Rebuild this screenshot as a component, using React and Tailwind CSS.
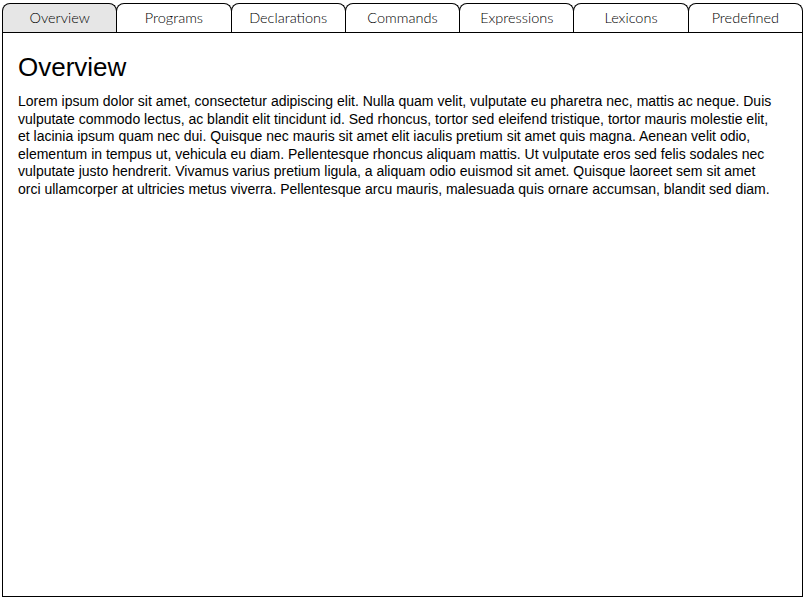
import React, { useState } from 'react';

const TABS = ['Overview', 'Programs', 'Declarations', 'Commands', 'Expressions', 'Lexicons', 'Predefined'];

const LOREM =
  'Lorem ipsum dolor sit amet, consectetur adipiscing elit. Nulla quam velit, vulputate eu pharetra nec, mattis ac neque. Duis vulputate commodo lectus, ac blandit elit tincidunt id. Sed rhoncus, tortor sed eleifend tristique, tortor mauris molestie elit, et lacinia ipsum quam nec dui. Quisque nec mauris sit amet elit iaculis pretium sit amet quis magna. Aenean velit odio, elementum in tempus ut, vehicula eu diam. Pellentesque rhoncus aliquam mattis. Ut vulputate eros sed felis sodales nec vulputate justo hendrerit. Vivamus varius pretium ligula, a aliquam odio euismod sit amet. Quisque laoreet sem sit amet orci ullamcorper at ultricies metus viverra. Pellentesque arcu mauris, malesuada quis ornare accumsan, blandit sed diam.';

const Tab = ({ label, active, first, onClick }) => (
  <button
    onClick={onClick}
    className={`flex-1 h-[29px] pb-[1px] flex items-center justify-center border-t border-l border-r border-black rounded-t-[8px] text-[14.5px] font-light text-black font-['Lato',sans-serif] ${
      first ? '' : '-ml-px'
    } ${active ? 'bg-[#e6e6e6]' : 'bg-white'}`}
  >
    {label}
  </button>
);

export default function App() {
  const [active, setActive] = useState(0);

  return (
    <div className="w-[807px] h-[601px] bg-white pl-[2px] pt-[3px]">
      <div className="w-[801px] flex flex-col">
        {/* tab strip */}
        <div className="flex">
          {TABS.map((t, i) => (
            <Tab key={t} label={t} first={i === 0} active={i === active} onClick={() => setActive(i)} />
          ))}
        </div>

        {/* panel */}
        <div className="h-[565px] border border-black pl-[15px] pr-[22px] pt-[19px] font-['Liberation_Sans',Arial,sans-serif] text-black">
          <h1 className="text-[26px] leading-[30px] mb-[11px]">{TABS[active]}</h1>
          <p className="text-[14px] leading-[17.5px]">{LOREM}</p>
        </div>
      </div>
    </div>
  );
}
